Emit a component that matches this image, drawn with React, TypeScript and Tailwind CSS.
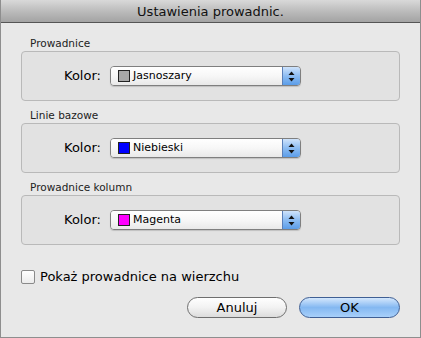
import React from "react";

interface IGroupProps {
    label: string
    value: string
    swatch: string
}

const font = { fontFamily: '"DejaVu Sans", "Liberation Sans", sans-serif' };

const Arrows = () => (
    <svg width="7" height="11" viewBox="0 0 7 11">
        <path d="M3.5 0.5 L6.5 4 L0.5 4 Z" fill="#111" />
        <path d="M0.5 7 L6.5 7 L3.5 10.5 Z" fill="#111" />
    </svg>
);

const Group: React.FC<IGroupProps> = ({ label, value, swatch }) => {
    return (
        <div className="flex flex-col">
            <p className="h-[14px] leading-[14px] text-[10.5px] text-[#222] pl-[9px] -mt-[1px] mb-[1px]">{label}</p>
            <div className="h-[50px] rounded-[4px] border border-[#b9b9b9] bg-[#e2e2e2] flex items-center pl-[42px]">
                <span className="text-[13px] text-black w-[46px]">Kolor:</span>
                <div className="w-[191px] h-[20px] flex rounded-[4px] border border-[#7f7f7f] overflow-hidden shadow-[0_1px_1px_rgba(0,0,0,0.15)]">
                    <div className="flex-1 flex items-center gap-[3px] pl-[7px] bg-gradient-to-b from-white via-[#f7f7f7] to-[#e9e9e9]">
                        <span className="w-[12px] h-[12px] border border-[#222]" style={{ backgroundColor: swatch }} />
                        <span className="text-[11px] text-black">{value}</span>
                    </div>
                    <div className="w-[18px] flex items-center justify-center border-l border-[#5a7fb8] bg-gradient-to-b from-[#cfe3fb] via-[#8cbcf2] to-[#5b9de8]">
                        <Arrows />
                    </div>
                </div>
            </div>
        </div>
    );
};

export default function App() {
    return (
        <div className="w-[421px] h-[338px] flex flex-col bg-[#e8e8e8] border-x border-b border-[#8e8e8e]" style={font}>
            <div className="h-[23px] shrink-0 flex items-center justify-center border-b border-[#555] bg-gradient-to-b from-[#d9d9d9] via-[#bcbcbc] to-[#a3a3a3]">
                <span className="text-[13px] text-[#111] leading-none">Ustawienia prowadnic.</span>
            </div>
            <div className="flex flex-col px-[20px] pt-[14px]">
                <div className="flex flex-col gap-[8px]">
                    <Group label="Prowadnice" value="Jasnoszary" swatch="#a8a8a8" />
                    <Group label="Linie bazowe" value="Niebieski" swatch="#0000ff" />
                    <Group label="Prowadnice kolumn" value="Magenta" swatch="#ff00ff" />
                </div>
                <label className="flex items-center gap-[5px] mt-[24px] h-[15px]">
                    <span className="w-[14px] h-[14px] rounded-[2px] border border-[#8a8a8a] bg-gradient-to-b from-white to-[#ececec]" />
                    <span className="text-[13px] text-black">Pokaż prowadnice na wierzchu</span>
                </label>
                <div className="flex justify-end gap-[12px] mt-[13px]">
                    <button className="w-[100px] h-[21px] rounded-full border border-[#6f6f6f] bg-gradient-to-b from-white via-[#f2f2f2] to-[#dcdcdc] text-[13px] text-black leading-none">Anuluj</button>
                    <button className="w-[101px] h-[21px] rounded-full border border-[#3f5f94] bg-gradient-to-b from-[#d4e7fc] via-[#84b8f1] to-[#a8d0fa] text-[13px] text-black leading-none">OK</button>
                </div>
            </div>
        </div>
    );
}
